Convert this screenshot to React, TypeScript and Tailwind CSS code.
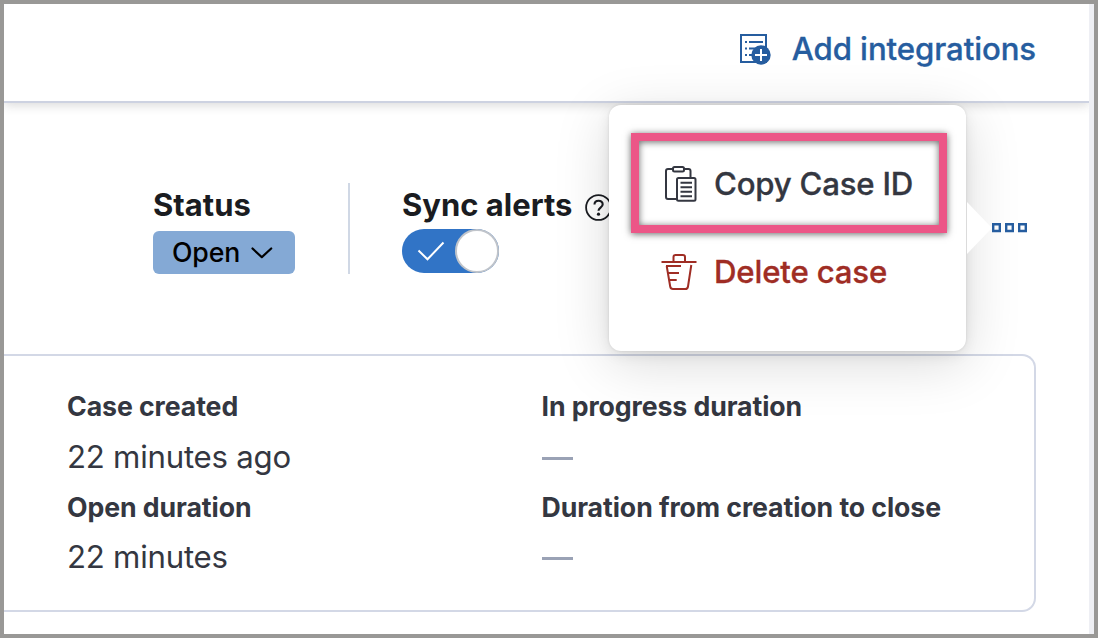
import React from "react";

function AddListIcon() {
  return (
    <svg width="32" height="32" viewBox="0 0 32 32" className="shrink-0" fill="none">
      <path d="M1 1h25v27H1z" stroke="#265d9f" strokeWidth="2" />
      <path d="M5 8h2M5 14.500h2M5 21h2M9 8h14M9 14.500h14M9 21h8" stroke="#265d9f" strokeWidth="2" />
      <circle cx="21" cy="21" r="9.700" fill="#265d9f" />
      <path d="M21 15v12M15 21h12" stroke="#fff" strokeWidth="2" />
    </svg>
  );
}

function ClipboardIcon() {
  return (
    <svg width="34" height="38" viewBox="0 0 34 38" className="shrink-0" fill="none" stroke="#343741" strokeWidth="2">
      <path d="M8.500 4H4Q2 4 2 6v26q0 2 2 2h9" />
      <path d="M20 4h4.500q2 0 2 2v6" />
      <rect x="9" y="2" width="11" height="4.500" rx="1.500" />
      <rect x="13" y="13" width="18.500" height="22.800" rx="1.500" />
      <path d="M16.500 17.700h11.500M16.500 22.200h11.500M16.500 26.700h11.500M16.500 31.200h11.500" />
    </svg>
  );
}

function TrashIcon() {
  return (
    <svg width="36" height="38" viewBox="0 0 36 38" className="shrink-0" fill="none" stroke="#9f2d24" strokeWidth="2">
      <path d="M.500 9h35M12.500 9V4q0-2 2-2h7.500q2 0 2 2v5" />
      <path d="M5 13h15M5.700 13l3.500 20.500q.4 2.500 2.800 2.500h12.300q2.300 0 2.700-2.500L30.300 12M7.500 20H18M8.700 27h7" />
    </svg>
  );
}

function HelpIcon() {
  return (
    <svg width="27" height="27" viewBox="0 0 27 27" className="shrink-0" fill="none" stroke="#1a1c21" strokeWidth="1.800">
      <circle cx="13.500" cy="13.500" r="12.400" />
      <path d="M9.500 10.500c0-5 8.200-5 8.200-.3 0 3.500-4.200 3.300-4.200 6.600" strokeWidth="2.100" />
      <circle cx="13.500" cy="20.200" r="1.600" fill="#1a1c21" stroke="none" />
    </svg>
  );
}

function Metric({ label, value }: { label: string; value?: string }) {
  return (
    <div>
      <div className="h-[50px] text-[26.700px] leading-[50px] font-bold tracking-[-0.09px]">{label}</div>
      <div className="flex h-[50.500px] items-center pt-[2px] text-[31.200px] tracking-[-0.23px]">
        {value ?? <span className="mt-[2px] h-[3px] w-[31.500px] bg-[#9aa2b5]" />}
      </div>
    </div>
  );
}

function ActionsMenu() {
  return (
    <div className="absolute top-[105px] left-[609px] h-[246px] w-[357px] rounded-xl bg-white pt-7 pl-[22px] shadow-[0_0_3px_rgba(0,0,0,0.1),0_4px_14px_rgba(0,0,0,0.08),0_12px_55px_rgba(0,0,0,0.15)]">
      <div className="relative flex h-[100px] w-[316px] items-center border-8 border-[#ec5687] pt-[2px] pl-[25px] shadow-[0_1px_7px_rgba(0,0,0,0.6),inset_0_1px_7px_rgba(0,0,0,0.6)]">
        <ClipboardIcon />
        <span className="ml-[16px] text-[31.200px] leading-10 font-medium tracking-[-0.22px] text-[#343741] [-webkit-text-stroke:0.3px]">Copy Case ID</span>
      </div>
      <div className="mt-[19px] ml-[30px] flex h-10 items-center text-[31.200px] leading-10 font-medium tracking-[-0.18px] text-[#9f2d24] [-webkit-text-stroke:0.3px]">
        <TrashIcon />
        <span className="ml-[17px]">Delete case</span>
      </div>
      <svg className="absolute top-[97px] left-[357px]" width="26" height="52" viewBox="0 0 26 52">
        <path d="M1 0v52l25-26z" fill="#fff" />
      </svg>
    </div>
  );
}

export default function App() {
  return (
    <div className="relative flex h-[638px] w-[1098px] overflow-hidden border-4 border-[#999896] bg-white font-['Inter',sans-serif] whitespace-nowrap text-[#343741]">
      <div className="flex w-[1085px] flex-col">
        <header className="flex h-[99px] shrink-0 items-start justify-end border-b-2 border-[#cdd2e1] pt-[25px] pr-[53px] text-[#265d9f] shadow-[0_2px_10px_rgba(60,60,60,0.2)]">
          <div className="flex h-10 items-center">
            <div className="pt-[2px]"><AddListIcon /></div>
            <span className="ml-[20px] text-[31.200px] leading-10 font-medium tracking-[-0.1px] [-webkit-text-stroke:0.3px]">Add integrations</span>
          </div>
        </header>

        <section className="flex h-[251px] shrink-0 items-start pt-20 pl-[149px] text-[#1a1c21]">
          <div className="w-[195px]">
            <div className="h-12 text-[31px] leading-[44px] font-bold">Status</div>
            <button className="flex h-[43px] w-[142px] items-center rounded-[6px] bg-[#84a9d5] pl-[19px] text-[26.700px] font-medium tracking-[-0.1px] text-black">
              Open
              <svg className="ml-[11px]" width="22" height="14" viewBox="0 0 22 14" fill="none">
                <path d="M1.500 2.500l9.300 8.700L20.200 2.500" stroke="#000" strokeWidth="2.200" strokeLinecap="round" strokeLinejoin="round" />
              </svg>
            </button>
          </div>
          <div className="h-[91px] w-[2px] bg-[#d0d8e5]" />
          <div className="pl-[52px]">
            <div className="flex h-[46px] items-start">
              <span className="text-[31px] leading-[44px] font-bold">Sync alerts</span>
              <div className="ml-[13px] pt-[11px]"><HelpIcon /></div>
            </div>
            <div className="flex h-11 w-[97px] items-center justify-between rounded-full bg-[#3174c6]">
              <svg className="ml-[15px]" width="28" height="20" viewBox="0 0 28 20" fill="none">
                <path d="M1.500 9.500l9 8.800L26.500 1.500" stroke="#fff" strokeWidth="2" />
              </svg>
              <div className="size-11 rounded-full border-2 border-[#c0c4ca] bg-white" />
            </div>
          </div>
        </section>

        <section className="grid h-[258px] w-[1032px] shrink-0 grid-cols-[474.500px_1fr] content-start rounded-r-[14px] border-y-2 border-r-2 border-[#d3d8e6] pt-[25px] pl-[63px]">
          <Metric label="Case created" value="22 minutes ago" />
          <Metric label="In progress duration" />
          <Metric label="Open duration" value="22 minutes" />
          <Metric label="Duration from creation to close" />
        </section>
      </div>
      <div className="w-[5px] bg-[#eeeff4]" />

      <div className="absolute -top-1 -left-1">
        <ActionsMenu />
        <svg className="absolute top-[223px] left-[992px]" width="35" height="10" viewBox="0 0 35 10" fill="none" stroke="#265d9f" strokeWidth="2.400">
          <path d="M1.200 1.200h6.600v6.800H1.200zM14.200 1.200h6.600v6.800h-6.600zM27.200 1.200h6.600v6.800h-6.600z" />
        </svg>
      </div>
    </div>
  );
}
